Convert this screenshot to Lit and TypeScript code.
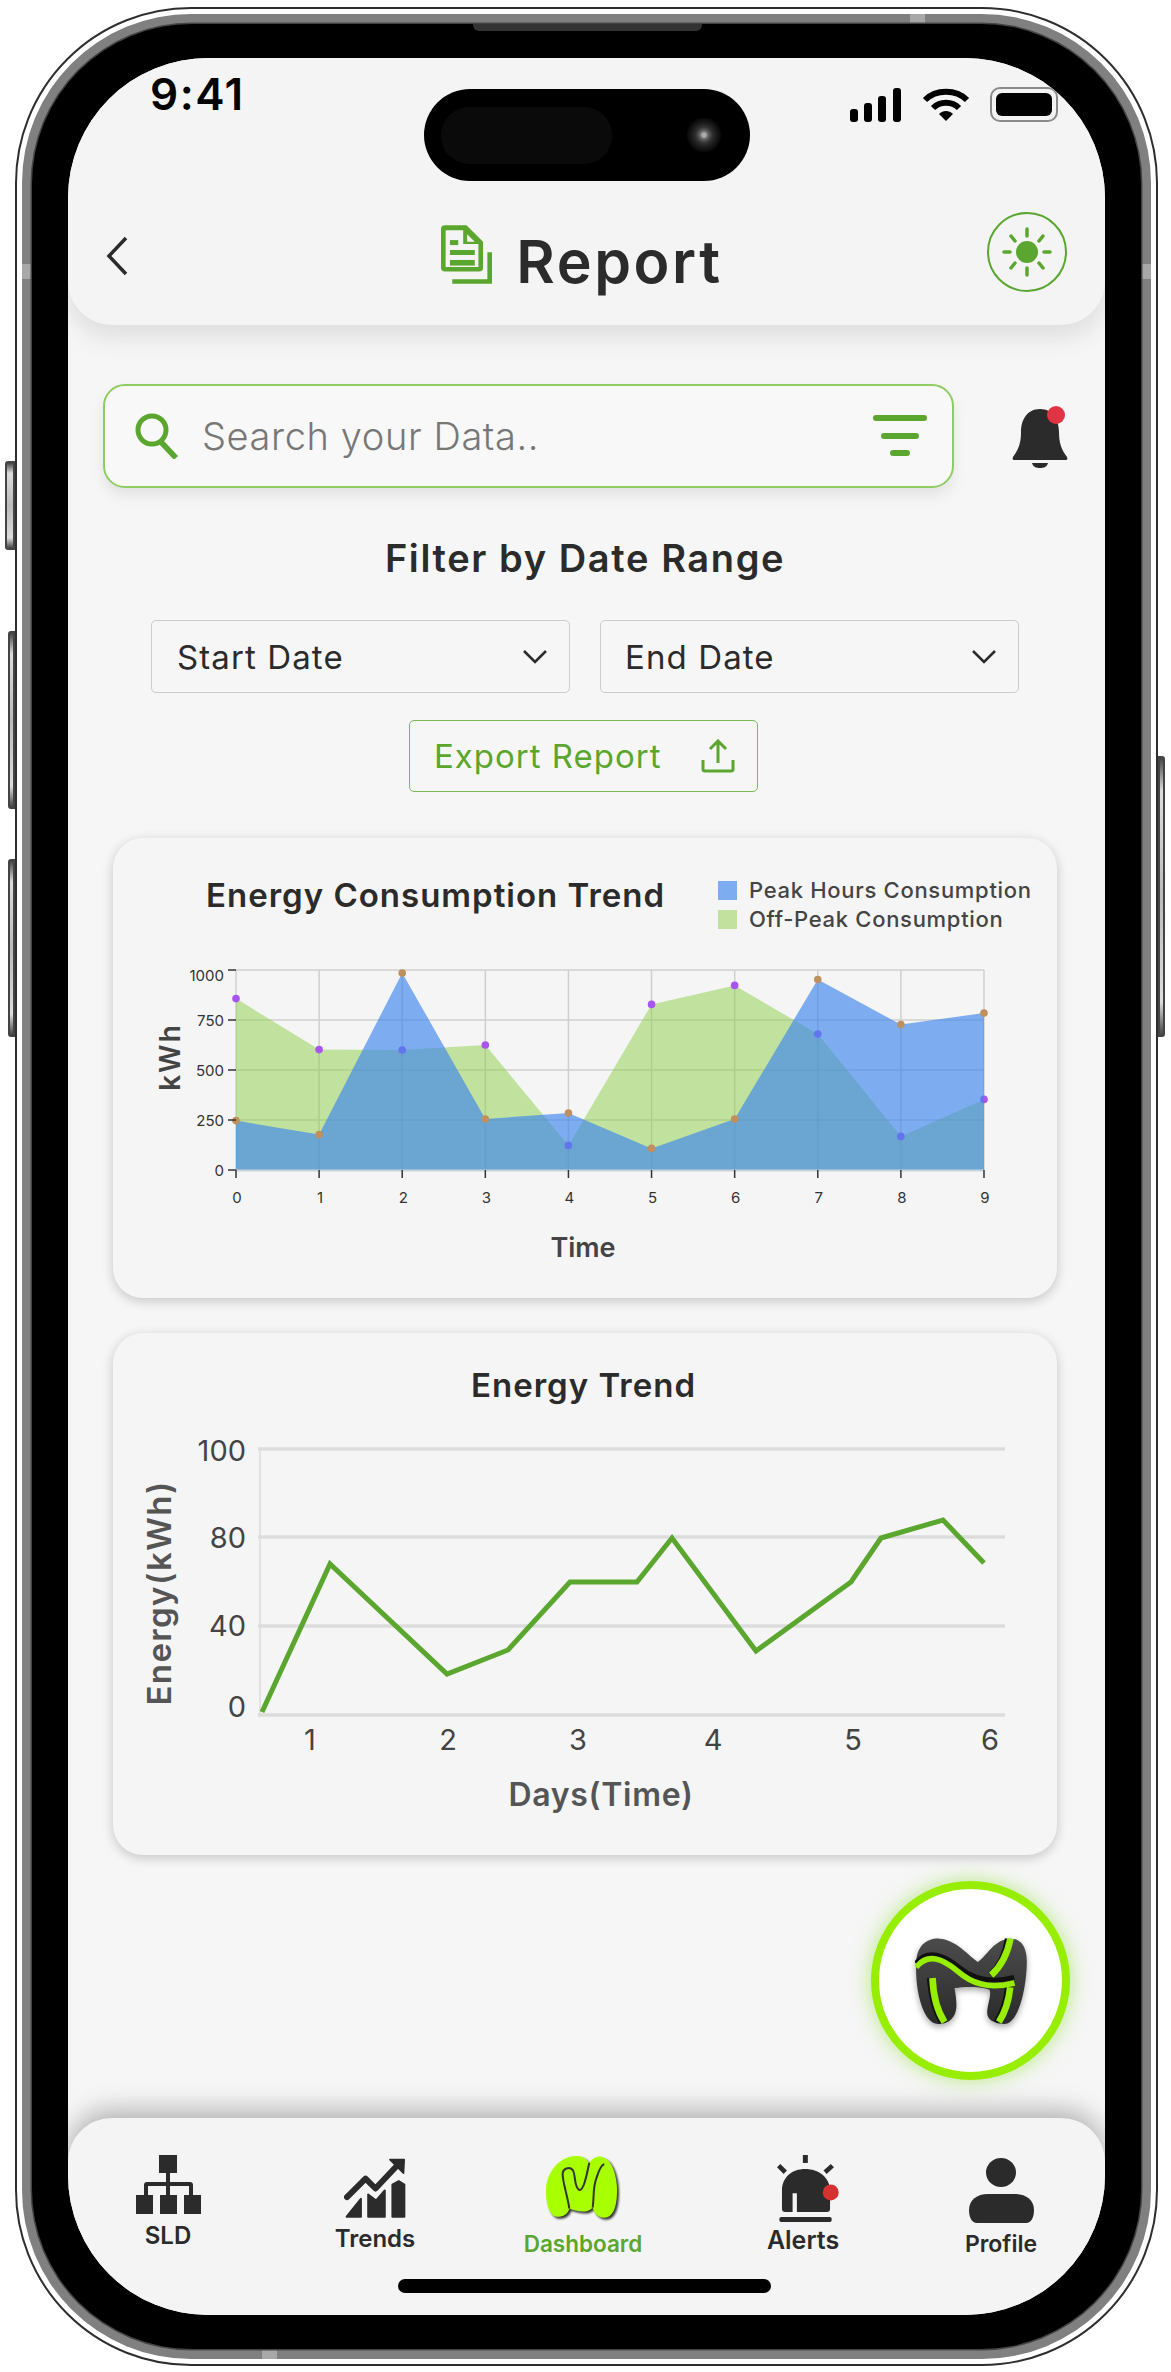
import { LitElement, css, html, svg, type TemplateResult } from "lit";
import { customElement } from "lit/decorators.js";

const GREEN = "#5aa62e";

const peak = [247, 177, 985, 255, 285, 108, 255, 952, 727, 785];
const offPeak = [857, 602, 600, 625, 123, 828, 923, 680, 168, 353];

const trendX = (i: number) => 236 + i * 83.11;
const trendY = (v: number) => 1170 - v * 0.2;
const areaPoints = (data: number[]) =>
  `236,1170 ${data.map((v, i) => `${trendX(i)},${trendY(v)}`).join(" ")} 984,1170`;

const energyLine =
  "262,1712 330,1564 447,1674 508,1650 570,1582 637,1582 672,1538 756,1651 851,1582 881,1538 943,1520 984,1563";

const navItems = [
  { key: "sld", label: "SLD" },
  { key: "trends", label: "Trends" },
  { key: "dash", label: "Dashboard" },
  { key: "alerts", label: "Alerts" },
  { key: "profile", label: "Profile" },
];

@customElement("app-root")
export class AppRoot extends LitElement {
  private navIcon(key: string): TemplateResult {
    switch (key) {
      case "sld":
        return html`<svg width="65" height="59" viewBox="0 0 65 59" fill="#2b2b2b">
          <rect x="23" y="0" width="18" height="18" />
          <rect x="30" y="18" width="4" height="22" />
          <path d="M8 40V30a3 3 0 0 1 3-3h43a3 3 0 0 1 3 3v10h-4V31H12v9z" />
          <rect x="0" y="40" width="17" height="19" />
          <rect x="24" y="40" width="17" height="19" />
          <rect x="48" y="40" width="17" height="19" />
        </svg>`;
      case "trends":
        return html`<svg width="63" height="62" viewBox="35 30 190 185" fill="#2b2b2b" stroke="#2b2b2b" stroke-width="6" stroke-linejoin="round">
          <path d="M44 150 100 94l30 30 64-68" fill="none" stroke-width="18" stroke-linecap="round" />
          <path d="M174 37h42l-2 40z" />
          <path d="M43 209 86 155v54z" />
          <path d="M108 209V142l24 18 26-30v79z" />
          <path d="M181 209V112l19-10 17 10v97z" />
        </svg>`;
      case "dash":
        return html`<svg class="lime-m" width="75" height="65" viewBox="35 30 225 195">
          <path
            d="M35 135C35 80 75 30 125 30c20 0 30 8 40 20 10-12 20-20 35-18 32 4 50 58 48 108-1 45-13 75-38 75-15 0-30-10-35-30-10 10-25 13-35 11-15-2-30-6-35-8-5 17-20 25-37 24C45 210 35 175 35 135Z"
            fill="#a8ff00"
          />
          <path
            d="M105 188C100 150 85 110 85 85c0-17 20-25 30-13 10 13 3 53 20 60 15 3 25-62 30-82M175 185c5-35 0-55 10-85 7-22 15-45 25-45"
            fill="none"
            stroke="#333"
            stroke-width="6"
          />
        </svg>`;
      case "alerts":
        return html`<svg width="63" height="69" viewBox="20 25 190 208" fill="#2b2b2b">
          <rect x="98" y="28" width="15" height="24" />
          <path d="M25 60l20 20" stroke="#2b2b2b" stroke-width="14" />
          <path d="M165 80l22-20" stroke="#2b2b2b" stroke-width="14" />
          <path d="M35 190V135c0-40 30-65 70-65s75 25 75 65v55a10 10 0 0 1-10 10H80v-57H67v57H45a10 10 0 0 1-10-10Z" />
          <rect x="27" y="215" width="158" height="15" rx="6" />
          <circle cx="182" cy="141" r="24" fill="#d43232" />
        </svg>`;
      default:
        return html`<svg width="65" height="65" viewBox="0 0 65 65" fill="#2b2b2b">
          <ellipse cx="32" cy="14.5" rx="15" ry="14.5" />
          <path d="M0 52C0 42 8 36 19 36h27c11 0 19 6 19 16 0 6-2 13-8 13H8c-6 0-8-7-8-13Z" />
        </svg>`;
    }
  }

  private consumptionChart(): TemplateResult {
    const grid = [970, 1020, 1070, 1120];
    return html`<svg class="chart" width="944" height="348" viewBox="113 950 944 348">
      ${grid.map(
        (y) => svg`<line x1="236" x2="984" y1=${y} y2=${y} stroke="#cfcfcf" stroke-width="1.5" />`
      )}
      ${peak.map(
        (_, i) => svg`<line x1=${trendX(i)} x2=${trendX(i)} y1="970" y2="1170" stroke="#cfcfcf" stroke-width="1.5" />`
      )}
      <polygon points=${areaPoints(offPeak)} fill="#8dcf49" fill-opacity="0.5" />
      ${offPeak.map(
        (v, i) => svg`<circle cx=${trendX(i)} cy=${trendY(v)} r="3.8" fill="#a855f0" />`
      )}
      <polygon points=${areaPoints(peak)} fill="#3c86ed" fill-opacity="0.65" />
      ${peak.map(
        (v, i) => svg`<circle cx=${trendX(i)} cy=${trendY(v)} r="3.8" fill="#c08f5e" />`
      )}
      <line x1="236" x2="984" y1="1170.5" y2="1170.5" stroke="#c9d3de" stroke-width="2" />
      ${[970, 1020, 1070, 1120, 1170].map(
        (y) => svg`<line x1="228" x2="236" y1=${y} y2=${y} stroke="#333" stroke-width="1.5" />`
      )}
      ${peak.map(
        (_, i) => svg`<line x1=${trendX(i)} x2=${trendX(i)} y1="1170" y2="1178" stroke="#333" stroke-width="1.5" />`
      )}
      ${[
        ["1000", 976],
        ["750", 1021],
        ["500", 1071],
        ["250", 1121],
        ["0", 1171],
      ].map(
        ([t, y]) => svg`<text class="tick" x="224" y=${Number(y) + 5} text-anchor="end">${t}</text>`
      )}
      ${peak.map(
        (_, i) => svg`<text class="tick" x=${trendX(i) + 1} y="1203" text-anchor="middle">${i}</text>`
      )}
      <text class="axis-small" x="583" y="1257" text-anchor="middle">Time</text>
      <text class="axis-kwh" transform="translate(180 1057) rotate(-90)" text-anchor="middle">kWh</text>
    </svg>`;
  }

  private energyChart(): TemplateResult {
    return html`<svg class="chart" width="944" height="430" viewBox="113 1425 944 430">
      <line x1="260" x2="260" y1="1449" y2="1715" stroke="#e2e2e2" stroke-width="2" />
      ${[1449, 1537, 1626, 1715].map(
        (y) => svg`<line x1="258" x2="1005" y1=${y} y2=${y} stroke="#dcdcdc" stroke-width="3.5" />`
      )}
      <polyline points=${energyLine} fill="none" stroke=${GREEN} stroke-width="5" />
      ${[
        ["100", 1461],
        ["80", 1548],
        ["40", 1636],
        ["0", 1717],
      ].map(
        ([t, y]) => svg`<text class="tick-big" x="246" y=${y} text-anchor="end">${t}</text>`
      )}
      ${[310, 448, 578, 713, 853, 990].map(
        (x, i) => svg`<text class="tick-big" x=${x} y="1750" text-anchor="middle">${i + 1}</text>`
      )}
      <text class="axis-days" x="601" y="1806" text-anchor="middle">Days(Time)</text>
      <text class="axis-energy" transform="translate(171 1593) rotate(-90)" text-anchor="middle">Energy(kWh)</text>
    </svg>`;
  }

  render(): TemplateResult {
    return html`<div class="frame">
      <span class="side b1"></span>
      <span class="side b2"></span>
      <span class="side b3"></span>
      <span class="side b4"></span>
      <div class="rim">
        <span class="band top"></span>
        <span class="band low"></span>
        <span class="band left"></span>
        <span class="band right"></span>
        <div class="bezel">
          <span class="sensor"></span>
          <div class="screen">
            <div class="island">
              <span class="island-inner"></span>
              <span class="camera"></span>
            </div>

            <header>
              <div class="status">
                <span class="time">9:41</span>
                <div class="status-icons">
                  <svg width="52" height="34" viewBox="0 0 52 34" fill="#000">
                    <rect x="0" y="21" width="8" height="13" rx="3" />
                    <rect x="14" y="15" width="8" height="19" rx="3" />
                    <rect x="28" y="8" width="8" height="26" rx="3" />
                    <rect x="43" y="0" width="8" height="34" rx="3" />
                  </svg>
                  <svg width="48" height="34" viewBox="0 0 48 34" fill="none" stroke="#000" stroke-width="6">
                    <path d="M3 12C14 1 34 1 45 12" />
                    <path d="M11 20C18 13 30 13 37 20" />
                    <path d="M17 26l7 7 7-7c-4-4-10-4-14 0Z" fill="#000" stroke="none" />
                  </svg>
                  <div class="battery"><span></span></div>
                </div>
              </div>
              <div class="title-row">
                <svg class="back" width="24" height="40" viewBox="0 0 24 40" fill="none" stroke="#2b2b2b" stroke-width="3.5">
                  <path d="M21 2 4 20l17 18" />
                </svg>
                <div class="title">
                  <svg class="doc" width="53" height="61" viewBox="15 12 160 183" fill=${GREEN}>
                    <path
                      fill-rule="evenodd"
                      d="M30 15H95l50 50v78a12 12 0 0 1-12 12H30a12 12 0 0 1-12-12V27a12 12 0 0 1 12-12ZM32 30V141H131V72H85V30ZM97 42l23 23H97Z"
                    />
                    <rect x="45" y="60" width="25" height="15" />
                    <rect x="45" y="90" width="75" height="15" />
                    <rect x="45" y="120" width="75" height="17" />
                    <path d="M158 97h14v95H52v-14H158Z" />
                  </svg>
                  <h1>Report</h1>
                </div>
                <div class="sun">
                  <svg width="80" height="80" viewBox="0 0 80 80">
                    <circle cx="40" cy="40" r="11" fill=${GREEN} />
                    <g stroke=${GREEN} stroke-width="3.5" stroke-linecap="round">
                      <path d="M40 17v7M40 56v7M17 40h6M57 40h6" />
                      <path d="M24 24l4 5M56 24l-4 5M24 56l4-5M56 56l-4-5" />
                    </g>
                  </svg>
                </div>
              </div>
            </header>

            <main>
              <div class="search-row">
                <div class="search">
                  <svg class="search-icon" width="44" height="46" viewBox="0 0 44 46" fill="none" stroke=${GREEN} stroke-width="5">
                    <circle cx="17" cy="17" r="14" />
                    <path d="M26 29l15 16" stroke-width="5.5" />
                  </svg>
                  <span class="placeholder">Search your Data..</span>
                  <svg class="filter" width="54" height="44" viewBox="0 0 54 44" stroke=${GREEN} stroke-width="6" stroke-linecap="round">
                    <path d="M3 4h48M11 22h32M20 39h14" />
                  </svg>
                </div>
                <svg class="bell" width="58" height="62" viewBox="0 0 58 62">
                  <path
                    d="M28 3C15 3 9 14 9 26c0 10-2 17-8 25-1 2 0 3 2 3h50c2 0 3-1 2-3-6-8-8-15-8-25C47 14 41 3 28 3Z"
                    fill="#2b2b2b"
                  />
                  <path d="M20 57h16c-1 4-4 5-8 5s-7-1-8-5Z" fill="#2b2b2b" />
                  <circle cx="44" cy="9" r="9" fill="#e03444" />
                </svg>
              </div>

              <h2>Filter by Date Range</h2>

              <div class="dates">
                ${["Start Date", "End Date"].map(
                  (label) => html`<div class="date">
                    <span>${label}</span>
                    <svg width="24" height="14" viewBox="0 0 24 14" fill="none" stroke="#2b2b2b" stroke-width="2.6">
                      <path d="M1 1l11 11L23 1" />
                    </svg>
                  </div>`
                )}
              </div>

              <div class="export">
                <span>Export Report</span>
                <svg width="34" height="34" viewBox="0 0 34 34" fill="none" stroke=${GREEN} stroke-width="3">
                  <path d="M17 24V3M9 10l8-8 8 8" />
                  <path d="M2 21v9a2 2 0 0 0 2 2h26a2 2 0 0 0 2-2v-9" />
                </svg>
              </div>

              <section class="card first">
                <div class="card-head">
                  <h3>Energy Consumption Trend</h3>
                  <div class="legend">
                    <div><i class="blue"></i>Peak Hours Consumption</div>
                    <div><i class="lime"></i>Off-Peak Consumption</div>
                  </div>
                </div>
                ${this.consumptionChart()}
              </section>

              <section class="card second">
                <h3 class="center">Energy Trend</h3>
                ${this.energyChart()}
              </section>
            </main>

            <div class="fab">
              <svg class="m-logo" width="112" height="86" viewBox="222 230 335 258">
                <defs>
                  <linearGradient id="mfill" x1="0" y1="0" x2="0" y2="1">
                    <stop offset="0" stop-color="#4c4c4c" />
                    <stop offset="1" stop-color="#2a2a2a" />
                  </linearGradient>
                </defs>
                <path
                  d="M225 310C225 250 260 230 295 232c45 2 80 43 115 70 30-22 50-70 100-70 35 0 47 33 47 68 0 70-22 188-67 188-20 0-52-8-52-33 0-25 14-55 7-70-25-10-75-10-105-5 5 30 10 60 0 80-10 20-30 28-50 28-40 0-68-88-65-178Z"
                  fill="url(#mfill)"
                />
                <g fill="none" stroke="#111" stroke-width="14">
                  <path d="M224 306c35-45 85-25 130 12 40 33 90 50 165 30" />
                  <path d="M264 350c4 50 16 100 36 132" />
                  <path d="M498 232c-6 40-20 78-52 108" />
                  <path d="M498 378c-4 40-15 75-34 104" />
                </g>
                <g fill="none" stroke="#98ee00">
                  <path d="M225 318c35-45 80-25 125 12 40 35 90 55 170 35" stroke-width="17" />
                  <path d="M274 350c2 50 15 100 36 132" stroke-width="20" />
                  <path d="M508 232c-8 40-25 80-58 110" stroke-width="20" />
                  <path d="M507 378c-4 40-15 75-34 104" stroke-width="20" />
                </g>
              </svg>
            </div>

            <nav>
              <div class="nav-items">
                ${navItems.map(
                  (item) => html`<div class="nav-item ${item.key}">
                    ${this.navIcon(item.key)}
                    <span>${item.label}</span>
                  </div>`
                )}
              </div>
              <div class="home-bar"></div>
            </nav>
          </div>
        </div>
      </div>
    </div>`;
  }

  static styles = css`
    :host {
      display: block;
      width: 1171px;
      height: 2372px;
      background: #fff;
      overflow: hidden;
      font-family: Inter, "Noto Sans", sans-serif;
      color: #2b2b2b;
    }

    h1,
    h2,
    h3 {
      margin: 0;
    }

    svg {
      display: block;
      flex: none;
    }

    .frame {
      position: relative;
      width: 1143px;
      height: 2359px;
      box-sizing: border-box;
      margin: 7px 0 0 15px;
      padding: 5px;
      background: #fff;
      border: 2px solid #2e2e2e;
      border-radius: 176px;
    }

    .side {
      position: absolute;
      box-sizing: border-box;
      background: linear-gradient(#444, #ddd 12%, #bbb 50%, #ddd 88%, #444);
      border: 2px solid #444;
    }

    .b1 {
      left: -12px;
      top: 452px;
      width: 10px;
      height: 89px;
      border-radius: 3px 0 0 3px;
    }

    .b2 {
      left: -9px;
      top: 622px;
      width: 7px;
      height: 178px;
      border-radius: 3px 0 0 3px;
    }

    .b3 {
      left: -9px;
      top: 850px;
      width: 7px;
      height: 178px;
      border-radius: 3px 0 0 3px;
    }

    .b4 {
      right: -9px;
      top: 747px;
      width: 7px;
      height: 281px;
      border-radius: 0 3px 3px 0;
    }

    .rim {
      position: relative;
      height: 100%;
      box-sizing: border-box;
      padding: 10px;
      background: #808080;
      border-radius: 169px;
    }

    .band {
      position: absolute;
      background: #a8a8a8;
    }

    .band.top {
      left: 888px;
      top: 0;
      width: 15px;
      height: 15px;
    }

    .band.low {
      left: 240px;
      bottom: 0;
      width: 15px;
      height: 15px;
    }

    .band.left {
      left: 0;
      top: 250px;
      width: 15px;
      height: 15px;
    }

    .band.right {
      right: 0;
      top: 250px;
      width: 15px;
      height: 15px;
    }

    .bezel {
      position: relative;
      height: 100%;
      box-sizing: border-box;
      padding: 34px 36px;
      background: #000;
      border-radius: 160px;
      box-shadow: 0 0 0 1.5px #444;
    }

    .sensor {
      position: absolute;
      left: 441px;
      top: 0;
      width: 229px;
      height: 7px;
      background: #333;
      border-radius: 0 0 6px 6px;
    }

    .screen {
      position: relative;
      height: 100%;
      display: flex;
      flex-direction: column;
      overflow: hidden;
      background: #f6f6f6;
      border-radius: 140px;
    }

    .island {
      position: absolute;
      z-index: 2;
      left: 356px;
      top: 31px;
      width: 326px;
      height: 92px;
      background: #000;
      border-radius: 46px;
    }

    .island-inner {
      position: absolute;
      left: 17px;
      top: 18px;
      width: 171px;
      height: 57px;
      background: #0a0a0a;
      border-radius: 28px;
    }

    .camera {
      position: absolute;
      left: 262px;
      top: 28px;
      width: 36px;
      height: 36px;
      border-radius: 50%;
      background: radial-gradient(circle, #aaa 0 2px, #666 4px, #333 8px, #1c1c1c 12px, #0c0c0c 16px, #000 18px);
    }

    header {
      flex: none;
      position: relative;
      z-index: 1;
      height: 267px;
      background: #f4f4f4;
      border-radius: 0 0 44px 44px;
      box-shadow: 0 12px 26px rgba(0, 0, 0, 0.1);
    }

    .status {
      height: 151px;
      box-sizing: border-box;
      padding: 30px 47px 0 82px;
      display: flex;
      justify-content: space-between;
      align-items: flex-start;
    }

    .time {
      margin-top: -21px;
      font-size: 44px;
      line-height: 54px;
      font-weight: 600;
      color: #000;
      letter-spacing: 1.5px;
    }

    .status-icons {
      display: flex;
      align-items: center;
      gap: 20px;
      margin-top: -1px;
    }

    .battery {
      position: relative;
      width: 68px;
      height: 35px;
      box-sizing: border-box;
      padding: 4px;
      border: 2.5px solid #8a8a8a;
      border-radius: 10px;
    }

    .battery span {
      display: block;
      height: 100%;
      background: #000;
      border-radius: 6px;
    }

    .title-row {
      height: 80px;
      padding: 0 38px 0 37px;
      display: grid;
      grid-template-columns: 1fr auto 1fr;
      align-items: center;
    }

    .back {
      margin-top: 8px;
    }

    .title {
      align-self: start;
      display: flex;
      align-items: flex-start;
      gap: 23px;
      padding-right: 9px;
      margin-top: 15px;
    }

    h1 {
      font-size: 59px;
      line-height: 66px;
      font-weight: 600;
      letter-spacing: 2.6px;
      margin-top: 5px;
    }

    .sun {
      justify-self: end;
      width: 80px;
      height: 80px;
      box-sizing: border-box;
      border: 2.5px solid #5aa62e;
      border-radius: 50%;
      display: flex;
      align-items: center;
      justify-content: center;
    }

    main {
      flex: 1;
      min-height: 0;
      padding: 59px 35px 0;
    }

    .search-row {
      display: flex;
      align-items: flex-start;
    }

    .search {
      width: 852px;
      height: 104px;
      box-sizing: border-box;
      padding: 0 25px 0 30px;
      display: flex;
      align-items: center;
      background: #f8f8f8;
      border: 2px solid #8fcc62;
      border-radius: 22px;
      box-shadow: 0 8px 14px rgba(0, 0, 0, 0.08);
    }

    .placeholder {
      flex: 1;
      margin-left: 23px;
      font-size: 38px;
      font-weight: 300;
      color: #777;
      letter-spacing: 0.6px;
    }

    .bell {
      margin: 22px 0 0 58px;
    }

    h2 {
      margin: 47px 0 0 -3px;
      text-align: center;
      font-size: 38px;
      line-height: 46px;
      font-weight: 600;
      letter-spacing: 1.6px;
    }

    .dates {
      margin: 39px 0 0 48px;
      display: flex;
      gap: 30px;
    }

    .date {
      width: 419px;
      height: 73px;
      box-sizing: border-box;
      padding: 0 22px 0 25px;
      display: flex;
      align-items: center;
      justify-content: space-between;
      background: #f6f6f6;
      border: 1.5px solid #cbcbcb;
      border-radius: 5px;
      font-size: 33px;
      letter-spacing: 1.1px;
    }

    .date:last-child {
      padding-left: 24px;
    }

    .export {
      margin: 27px 0 0 306px;
      width: 349px;
      height: 72px;
      box-sizing: border-box;
      padding: 0 22px 0 24px;
      display: flex;
      align-items: center;
      justify-content: space-between;
      border: 1.5px solid #7cb957;
      border-radius: 5px;
      font-size: 33px;
      color: #5aa62e;
      letter-spacing: 1px;
    }

    .card {
      margin-left: 10px;
      width: 944px;
      background: #f5f5f5;
      border-radius: 30px;
      box-shadow: 0 3px 12px rgba(0, 0, 0, 0.2);
      overflow: hidden;
    }

    .first {
      margin-top: 46px;
      height: 460px;
    }

    .second {
      margin-top: 35px;
      height: 522px;
    }

    .card-head {
      height: 112px;
      box-sizing: border-box;
      padding: 38px 0 0 93px;
      display: flex;
      align-items: flex-start;
    }

    h3 {
      width: 512px;
      font-size: 33px;
      line-height: 38px;
      font-weight: 600;
      letter-spacing: 1px;
    }

    h3.center {
      width: auto;
      height: 92px;
      box-sizing: border-box;
      padding: 33px 3px 0 0;
      text-align: center;
    }

    .legend {
      font-size: 22px;
      line-height: 29px;
      font-weight: 500;
      color: #444;
      letter-spacing: 0.7px;
    }

    .legend div {
      display: flex;
      align-items: center;
      gap: 12px;
    }

    .legend i {
      width: 19px;
      height: 19px;
    }

    .blue {
      background: #7dadf0;
    }

    .lime {
      background: #c1e29f;
    }

    .tick {
      font-size: 15px;
      fill: #333;
    }

    .axis-small {
      font-size: 27px;
      font-weight: 600;
      fill: #444;
    }

    .axis-kwh {
      font-size: 28px;
      font-weight: 600;
      letter-spacing: 2px;
      fill: #444;
    }

    .tick-big {
      font-size: 29px;
      fill: #444;
    }

    .axis-days {
      font-size: 32px;
      font-weight: 600;
      letter-spacing: 0.7px;
      fill: #555;
    }

    .axis-energy {
      font-size: 33px;
      font-weight: 600;
      letter-spacing: 1.4px;
      fill: #555;
    }

    .fab {
      position: absolute;
      right: 35px;
      top: 1823px;
      width: 199px;
      height: 199px;
      box-sizing: border-box;
      display: flex;
      align-items: center;
      justify-content: center;
      background: #fff;
      border: 8px solid #97ee00;
      border-radius: 50%;
      box-shadow: 0 0 20px rgba(130, 220, 30, 0.55);
    }

    .m-logo {
      filter: drop-shadow(0 3px 3px rgba(0, 0, 0, 0.35));
    }

    .lime-m {
      filter: drop-shadow(2px 2px 1px #333);
    }

    nav {
      flex: none;
      position: relative;
      height: 197px;
      background: #f4f4f4;
      border-radius: 44px 44px 0 0;
      box-shadow: 0 -8px 26px rgba(0, 0, 0, 0.28);
    }

    .nav-items {
      height: 161px;
      display: grid;
      grid-template-columns: 200px 214px 202px 238px 158px;
    }

    .nav-item {
      display: flex;
      flex-direction: column;
      align-items: center;
      font-size: 24px;
      line-height: 30px;
      font-weight: 600;
    }

    .sld {
      padding-top: 37px;
      gap: 7px;
    }

    .trends {
      padding-top: 39px;
      gap: 5px;
    }

    .dash {
      padding-top: 38px;
      gap: 8px;
      color: #5aa62e;
      font-size: 22.5px;
    }

    .alerts {
      padding-top: 36px;
      gap: 2px;
      font-size: 25px;
    }

    .alerts svg {
      margin-left: 10px;
    }

    .profile {
      padding-top: 40px;
      gap: 6px;
      font-size: 23px;
    }

    .home-bar {
      width: 373px;
      height: 14px;
      margin-left: 330px;
      background: #000;
      border-radius: 7px;
    }
  `;
}

declare global {
  interface HTMLElementTagNameMap {
    "app-root": AppRoot;
  }
}
